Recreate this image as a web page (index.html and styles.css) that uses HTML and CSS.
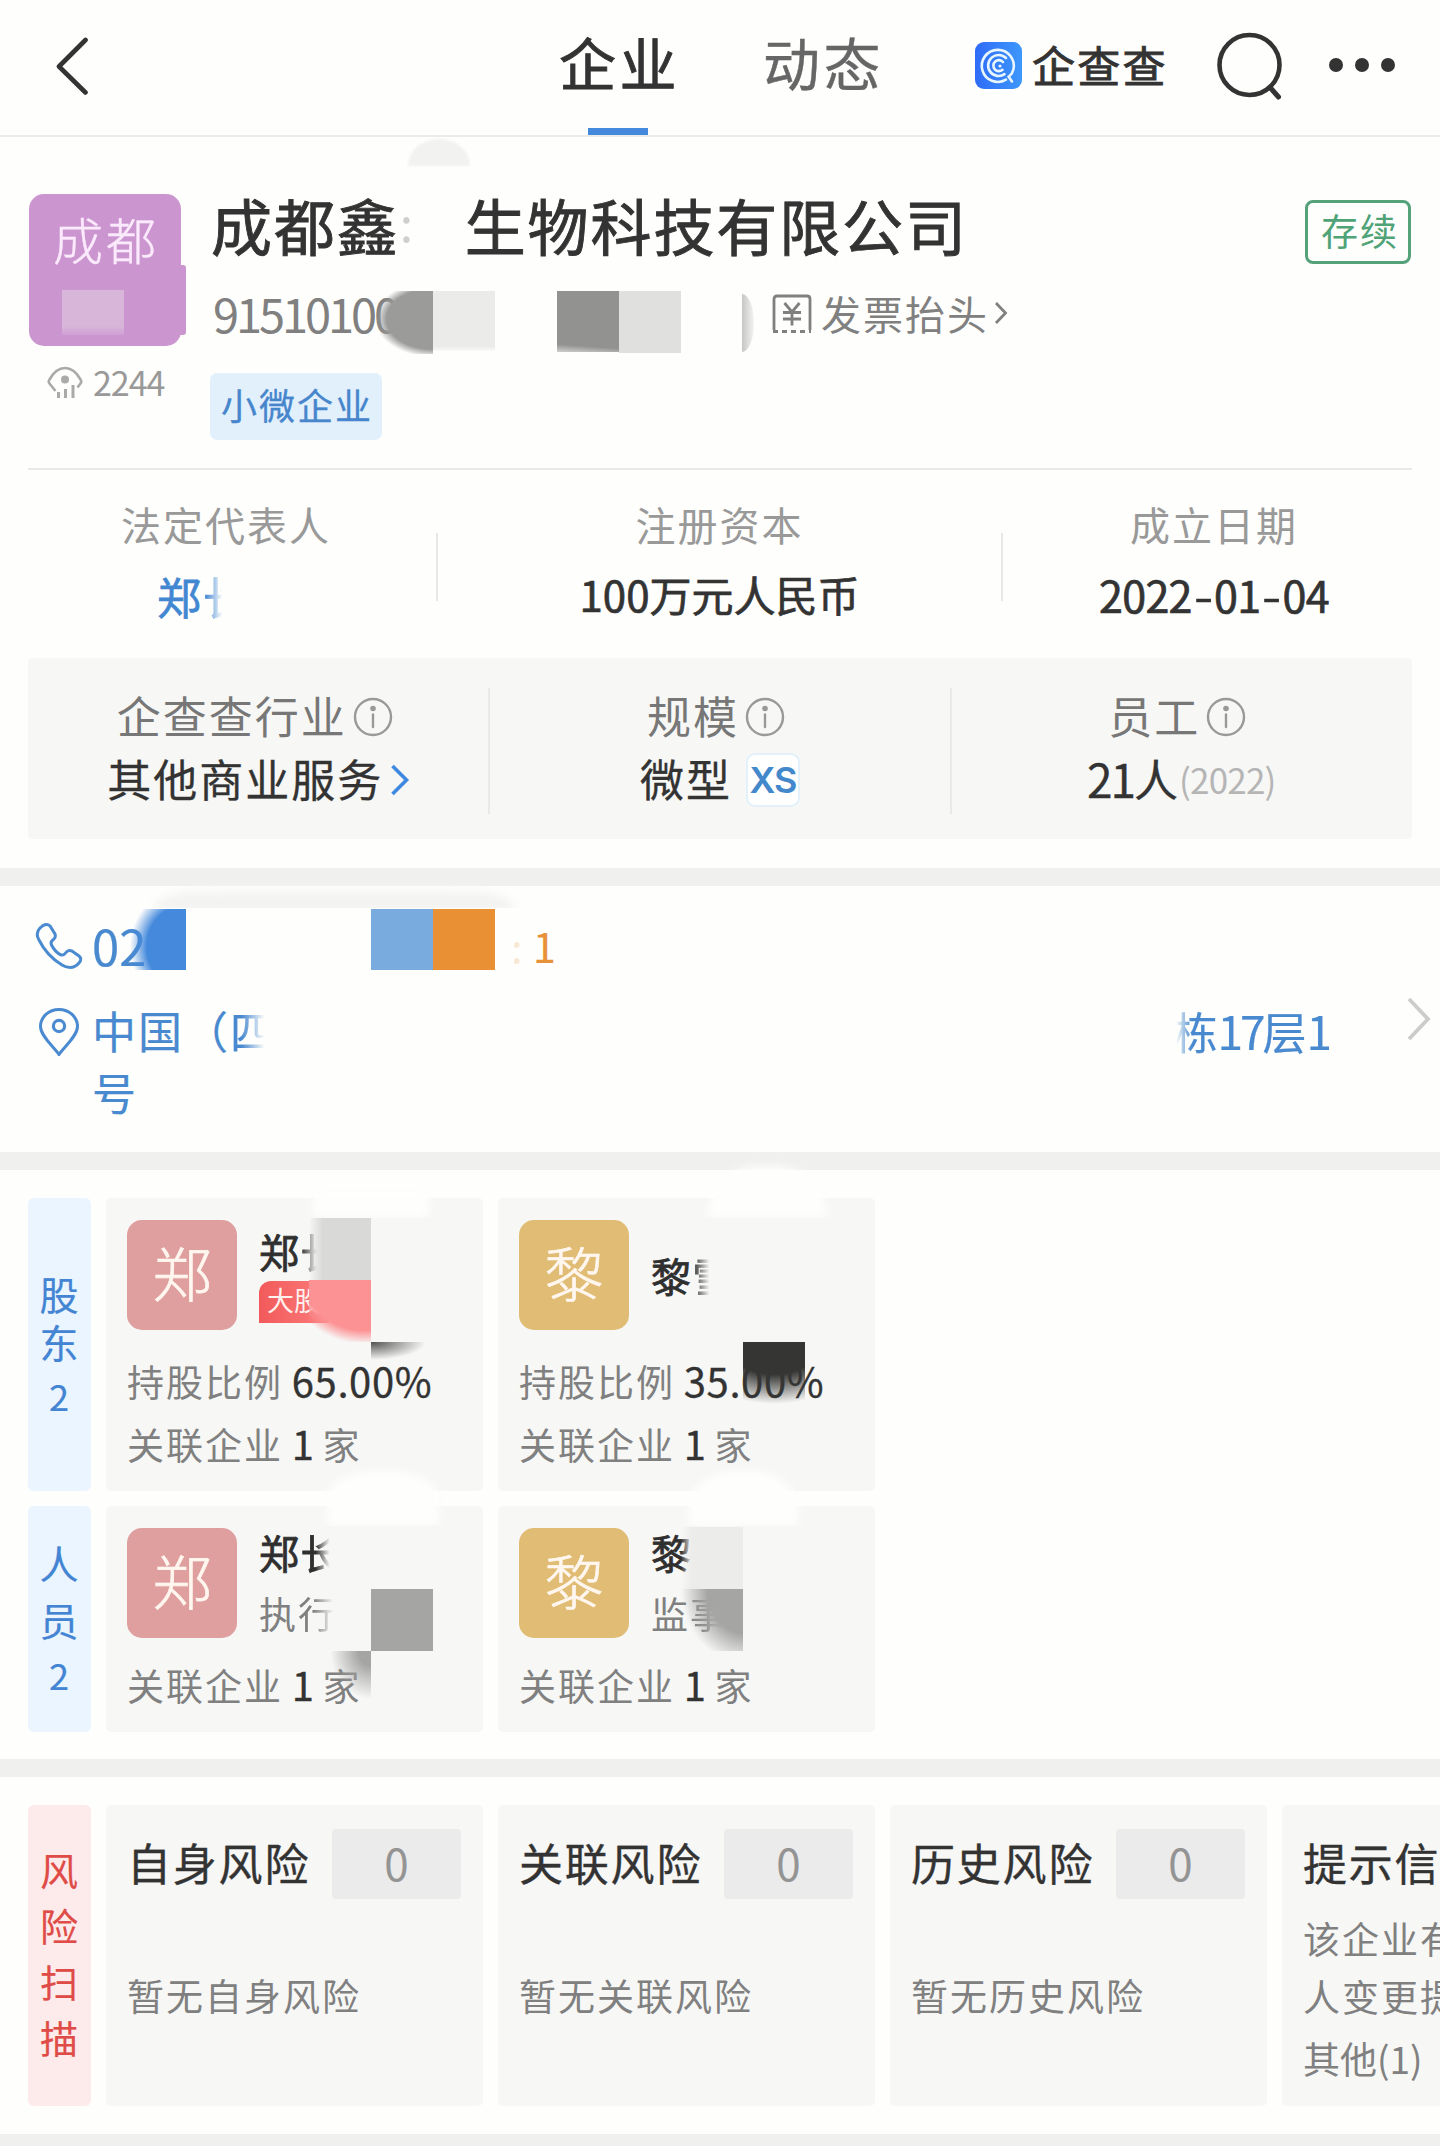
FILE: index.html
```html
<!DOCTYPE html>
<html lang="zh-CN">
<head>
<meta charset="utf-8">
<title>企查查</title>
<link rel="stylesheet" href="styles.css">
</head>
<body>
<svg class="defs" width="0" height="0">
  <symbol id="info" viewBox="0 0 40 40"><circle cx="20" cy="20" r="18" fill="none" stroke="#999" stroke-width="2.4"/><circle cx="20" cy="11.5" r="2.8" fill="#999"/><path d="M20 17.5V30" stroke="#999" stroke-width="2.4" stroke-linecap="round"/></symbol>
</svg>
<header class="topbar">
  <svg class="back" viewBox="0 0 32 58"><path d="M29.5 3L3 29.5 29.5 55.5" fill="none" stroke="#333" stroke-width="4.6" stroke-linecap="round" stroke-linejoin="round"/></svg>
  <nav class="tabs">
    <a class="tab tab-on">企业</a>
    <a class="tab">动态</a>
  </nav>
  <div class="brand">
    <svg class="brand-mark" viewBox="0 0 47 47">
      <defs><linearGradient id="bg" x1="0" y1="0" x2="1" y2="0"><stop offset="0" stop-color="#2f6bf8"/><stop offset="1" stop-color="#3d97fb"/></linearGradient></defs>
      <rect width="47" height="47" rx="9" fill="url(#bg)"/>
      <g fill="none" stroke="#e8f6ff" stroke-width="2.6" stroke-linecap="round">
        <path d="M31 37.6A16 16 0 1 1 38.4 27.5Q37.600 31.500 34 34.500M33.500 34.500L37 39.500"/>
        <path d="M29.5 32.2A10.500 10.500 0 1 1 31 16"/>
        <path d="M27.5 27.8A5.500 5.500 0 1 1 28 20"/>
      </g>
      <circle cx="25" cy="24" r="1.600" fill="#e8f6ff"/>
    </svg>
    <span class="brand-name">企查查</span>
  </div>
  <svg class="search" viewBox="0 0 66 68"><circle cx="32.5" cy="33" r="30" fill="none" stroke="#333" stroke-width="4.6"/><path d="M54 56.5L61.5 65" stroke="#333" stroke-width="5" stroke-linecap="round"/></svg>
  <svg class="more" viewBox="0 0 68 16"><circle cx="8" cy="8" r="7" fill="#333"/><circle cx="34" cy="8" r="7" fill="#333"/><circle cx="60" cy="8" r="7" fill="#333"/></svg>
</header>

<main>
<section class="company">
  <i class="smudge smudge-dome"></i>
  <div class="company-side">
    <div class="logo">成都<i class="logo-tail"></i><i class="logo-patch"></i></div>
    <div class="views">
      <svg viewBox="0 0 36 34"><path d="M8.5 26L2.5 18.5Q1 16.5 2.5 14.500Q9 3 18 3T33.500 14.500Q35 16.500 33.500 18.500L30.500 22.500" fill="none" stroke="#aaa" stroke-width="2.600"/><circle cx="18" cy="14.500" r="4" fill="#aaa"/><path d="M11.500 27V33M18.500 24V33M26 20V33" stroke="#aaa" stroke-width="3"/></svg>
      <span>2244</span>
    </div>
  </div>
  <div class="company-main">
    <h1 class="title"><span>成都鑫</span><span class="title-gap">:</span><span class="title-rest">生物科技有限公司</span></h1>
    <div class="reg">
      <div class="reg-no">91510100
        <i class="patch reg-a"></i><i class="patch reg-b"></i><i class="patch reg-c"></i><i class="patch reg-d"></i><i class="patch reg-e"></i>
      </div>
      <svg class="invoice-icon" viewBox="0 0 40 40"><path d="M2 36V5Q2 2 5 2H35Q38 2 38 5V36" fill="none" stroke="#808080" stroke-width="2.800"/><path d="M1 37.500H39" stroke="#808080" stroke-width="3" stroke-dasharray="5 4"/><path d="M12.500 9L20 18 27.500 9M11 18.500H29M11 25H29M20 18V31.500" fill="none" stroke="#808080" stroke-width="2.800"/></svg>
      <span class="invoice">发票抬头</span>
      <svg class="invoice-arrow" viewBox="0 0 14 24"><path d="M2 2L11.500 12 2 22" fill="none" stroke="#808080" stroke-width="2.800"/></svg>
    </div>
    <span class="tag">小微企业</span>
  </div>
  <span class="status">存续</span>
</section>

<section class="facts">
  <div class="fact fact-first"><span class="fact-label">法定代表人</span><span class="fact-value legal"><span>郑</span><span class="fade-legal">长</span></span></div>
  <div class="fact"><span class="fact-label">注册资本</span><span class="fact-value">100万元人民币</span></div>
  <div class="fact fact-last"><span class="fact-label">成立日期</span><span class="fact-value date">2022<span class="dash">-</span>01<span class="dash">-</span>04</span></div>
</section>

<section class="panel">
  <div class="cell">
    <div class="cell-label">企查查行业<svg class="info"><use href="#info"/></svg></div>
    <div class="cell-value">其他商业服务<svg class="cell-arrow" viewBox="0 0 20 32"><path d="M2.500 2L16.500 16 2.500 30" fill="none" stroke="#3f8ae0" stroke-width="3.600"/></svg></div>
  </div>
  <div class="cell">
    <div class="cell-label">规模<svg class="info"><use href="#info"/></svg></div>
    <div class="cell-value">微型<b class="size">XS</b></div>
  </div>
  <div class="cell">
    <div class="cell-label">员工<svg class="info"><use href="#info"/></svg></div>
    <div class="cell-value"><span class="staff">21</span>人<small>(2022)</small></div>
  </div>
</section>

<section class="contact band">
  <i class="smudge smudge-phone"></i>
  <div class="contact-row phone-row">
    <svg class="ico" viewBox="0 0 48 48"><path d="M5 6Q11 0 15 4L20 12Q21 15 19 17Q15 19.500 16.500 23Q20 30 26 33Q29 33.500 31 30.500Q33 27.500 37 29L44 34Q47.500 37 44 41Q37 49 27 43Q12 34 4 18Q0 11 5 6Z" fill="none" stroke="#4a8ad0" stroke-width="3"/></svg>
    <span class="phone">02</span><span class="phone-dot">:</span><span class="phone-count">1</span>
    <i class="patch ph-a"></i><i class="patch ph-b"></i><i class="patch ph-c"></i>
  </div>
  <div class="contact-row addr-row">
    <svg class="ico" viewBox="0 0 48 48"><path d="M24 46.500C19 39 5.500 28 5.500 18.500A18.500 17 0 0 1 42.500 18.500C42.500 28 29 39 24 46.500Z" fill="none" stroke="#4a8ad0" stroke-width="3"/><circle cx="24" cy="18" r="5.600" fill="none" stroke="#4a8ad0" stroke-width="3.200"/></svg>
    <p class="addr"><span>中国（<span class="fade-addr">四</span></span><span class="addr-end">栋<span class="addr-num">17</span>层<span class="addr-num">1</span></span><span class="addr-last">号</span></p>
    <svg class="addr-arrow" viewBox="0 0 24 44"><path d="M2 2L21 22 2 42" fill="none" stroke="#ccc" stroke-width="3.800"/></svg>
  </div>
</section>

<section class="people band">
  <div class="row row-holders">
    <div class="side">
      <span>股</span><span>东</span><span class="num">2</span>
    </div>
    <article class="card">
      <div class="who">
        <span class="avatar rose">郑</span>
        <div class="who-text"><span class="name">郑<span class="fade-s">长</span></span><span class="major">大股</span></div>
      </div>
      <p class="line">持股比例 <b>65.00%</b></p>
      <p class="line">关联企业 <b>1</b> 家</p>
      <i class="patch h1-a"></i><i class="patch h1-b"></i><i class="patch h1-c"></i><i class="smudge h1-d"></i>
    </article>
    <article class="card">
      <div class="who">
        <span class="avatar gold">黎</span>
        <div class="who-text"><span class="name">黎<span class="fade-s">雪</span></span></div>
      </div>
      <p class="line">持股比例 <b>35.00%</b></p>
      <p class="line">关联企业 <b>1</b> 家</p>
      <i class="patch h2-a"></i><i class="smudge h2-b"></i>
    </article>
  </div>
  <div class="row row-staff">
    <div class="side side-staff">
      <span>人</span><span>员</span><span class="num">2</span>
    </div>
    <article class="card">
      <div class="who">
        <span class="avatar rose">郑</span>
        <div class="who-text"><span class="name">郑<span class="fade-m">长</span></span><span class="post">执<span class="fade-l">行</span></span></div>
      </div>
      <p class="line">关联企业 <b>1</b> 家</p>
      <i class="patch s1-a"></i><i class="patch s1-b"></i><i class="smudge s1-c"></i>
    </article>
    <article class="card">
      <div class="who">
        <span class="avatar gold">黎</span>
        <div class="who-text"><span class="name">黎</span><span class="post">监<span class="fade-l">事</span></span></div>
      </div>
      <p class="line">关联企业 <b>1</b> 家</p>
      <i class="patch s2-a"></i><i class="patch s2-b"></i><i class="smudge s2-c"></i>
    </article>
  </div>
</section>

<section class="risk band">
  <div class="side side-risk"><span>风</span><span>险</span><span>扫</span><span>描</span></div>
  <article class="card"><div class="risk-head"><h2>自身风险</h2><span class="count">0</span></div><p class="none">暂无自身风险</p></article>
  <article class="card"><div class="risk-head"><h2>关联风险</h2><span class="count">0</span></div><p class="none">暂无关联风险</p></article>
  <article class="card"><div class="risk-head"><h2>历史风险</h2><span class="count">0</span></div><p class="none">暂无历史风险</p></article>
  <article class="card"><div class="risk-head"><h2>提示信</h2></div><p class="hint">该企业有<br>人变更提</p><p class="hint-other">其他(1)</p></article>
</section>
<div class="band-end"></div>
</main>
</body>
</html>
```
FILE: styles.css
```css
* { box-sizing: border-box; }
body {
  margin: 0;
  width: 1440px;
  height: 2146px;
  overflow: hidden;
  background: #fefefc;
  color: #333;
  font-family: "Noto Sans CJK SC", sans-serif;
}
h1, h2, p { margin: 0; font-weight: 400; }
b { font-weight: 400; }
svg { display: block; flex: none; }
.defs { position: absolute; }
i { display: block; }

/* top bar */
.topbar { display: flex; height: 137px; border-bottom: 2px solid #ebebea; }
.back { width: 32px; height: 58px; margin: 37px 0 0 56px; }
.tabs { display: flex; gap: 83px; margin-left: 471px; }
.tab {
  display: flex; flex-direction: column; align-items: center;
  width: 121px; height: 135px; padding-top: 21px;
  font-size: 57px; line-height: 80px; letter-spacing: 3.500px; color: #666;
  -webkit-text-stroke: .4px;
}
.tab-on { color: #333; -webkit-text-stroke: .9px; }
.tab-on::after { content: ""; width: 60px; height: 7px; margin: 27px 4px 0 0; background: #4589dd; }
.brand { display: flex; margin-left: 91px; gap: 10px; }
.brand-mark { width: 47px; height: 47px; margin-top: 42px; }
.brand-name { width: 140px; margin-top: 34px; font-size: 43px; line-height: 60px; letter-spacing: 2.200px; -webkit-text-stroke: .9px; white-space: nowrap; }
.search { width: 66px; height: 68px; margin: 32px 0 0 45px; }
.more { width: 68px; height: 16px; margin: 57px 0 0 45px; }

/* smears left over the content */
.patch, .smudge { position: absolute; }
.smudge { background: #fefefc; }

/* company */
.company { position: relative; display: flex; height: 331px; padding-left: 29px; }
.smudge-dome { left: 408px; top: 2px; width: 62px; height: 27px; background: #f2f2f1; border-radius: 31px 31px 0 0 / 26px 26px 0 0; filter: blur(1px); }
.company-side { width: 182px; padding-top: 57px; }
.logo {
  position: relative; width: 152px; height: 152px; border-radius: 15px; background: #cb96d0;
  padding-left: 24px; color: #fbeafb; font-size: 50px; line-height: 89px; letter-spacing: 3px; font-weight: 300;
  -webkit-text-stroke: .4px;
}
.logo-tail { position: absolute; left: 140px; top: 71px; width: 17px; height: 70px; background: #cb96d0; border-radius: 0 3px 3px 0; }
.logo-patch { position: absolute; left: 33px; top: 96px; width: 62px; height: 45px; background: linear-gradient(#d8b6da 80%, #cf9fd3); }
.views { display: flex; align-items: center; gap: 10px; height: 40px; margin: 16px 0 0 18px; color: #999; font-size: 34px; line-height: 40px; letter-spacing: -1px; }
.views svg { width: 36px; height: 34px; }
.company-main { padding-top: 53px; width: 1094px; }
.title { display: flex; height: 70px; font-size: 61px; line-height: 70px; letter-spacing: 1.900px; -webkit-text-stroke: .9px; white-space: nowrap; }
.title-gap { width: 65px; color: #bbb; font-size: 48px; line-height: 62px; -webkit-text-stroke: 0; clip-path: inset(0 54px 0 0); opacity: .7; }
.reg { display: flex; align-items: center; height: 62px; margin-top: 22px; color: #808080; }
.reg-no { position: relative; width: 561px; padding-left: 2px; font-size: 47px; line-height: 62px; letter-spacing: -3.100px; }
.reg-a { left: 166px; top: 9px; width: 56px; height: 63px; background: radial-gradient(ellipse 58px 38px at 56px 28px, #9b9b9a 80%, transparent); }
.reg-b { left: 222px; top: 9px; width: 62px; height: 60px; background: linear-gradient(#ebebea 92%, #fafaf9); }
.reg-c { left: 346px; top: 9px; width: 62px; height: 61px; background: linear-gradient(184deg, #929290 88%, #d0d0cf); }
.reg-d { left: 408px; top: 9px; width: 62px; height: 62px; background: #e0e0de; }
.reg-e { left: 531px; top: 12px; width: 12px; height: 58px; background: linear-gradient(90deg, #c6c6c5, #f4f4f3); border-radius: 0 12px 12px 0 / 0 29px 29px 0; }
.invoice-icon { width: 40px; height: 40px; margin-top: 2px; }
.invoice { margin-left: 9px; font-size: 40px; line-height: 56px; letter-spacing: 2px; }
.invoice-arrow { width: 14px; height: 24px; margin-left: 5px; }
.tag { display: block; width: 172px; height: 67px; margin: 29px 0 0 -1px; padding-left: 11px; border-radius: 7px; background: #e2f0fc; color: #4786cc; font-size: 36px; line-height: 62px; letter-spacing: 2px; white-space: nowrap; -webkit-text-stroke: .3px; }
.status { width: 106px; height: 64px; margin-top: 63px; padding-left: 13px; border: 3px solid #55a17a; border-radius: 8px; color: #4fa377; font-size: 37px; line-height: 55px; letter-spacing: 2px; white-space: nowrap; }

/* facts */
.facts { display: grid; grid-template-columns: 409px 565px 410px; height: 190px; margin: 0 28px; border-top: 2px solid #e9e9e8; padding-top: 26px; }
.fact { position: relative; display: flex; flex-direction: column; align-items: center; }
.fact + .fact::before { content: ""; position: absolute; left: -1px; top: 37px; width: 2px; height: 68px; background: #e8e8e7; }
.fact-first { padding-right: 13px; }
.fact-last { padding-left: 14px; }
.fact-label { color: #999; font-size: 40px; line-height: 56px; letter-spacing: 2px; }
.fact-value { margin-top: 12px; font-size: 42px; line-height: 60px; -webkit-text-stroke: .7px; white-space: nowrap; }
.date { font-size: 43px; letter-spacing: -.700px; }
.dash { display: inline-block; transform: scaleX(1.25); margin: 0 4px; }
.legal { width: 138px; margin-top: 14px; color: #4287d2; font-size: 44px; letter-spacing: 2px; }
.fade-legal { -webkit-mask: linear-gradient(90deg, #000 5%, transparent 42%); mask: linear-gradient(90deg, #000 5%, transparent 42%); }

/* industry panel */
.panel { display: grid; grid-template-columns: repeat(3, 1fr); height: 181px; margin: 0 28px; background: #f7f7f6; border-radius: 4px; }
.cell { position: relative; display: flex; flex-direction: column; align-items: center; padding-top: 26px; }
.cell + .cell::before { content: ""; position: absolute; left: -1px; top: 30px; width: 2px; height: 126px; background: #e9e9e8; }
.cell-label { display: flex; align-items: center; gap: 6px; height: 62px; margin-left: -8px; color: #777; font-size: 44px; line-height: 62px; letter-spacing: 2px; }
.info { width: 40px; height: 40px; margin-top: 4px; }
.cell-value { display: flex; align-items: center; height: 64px; font-size: 44px; line-height: 64px; letter-spacing: 2px; -webkit-text-stroke: .3px; }
.cell-arrow { width: 20px; height: 32px; margin: 4px 0 0 7px; }
.staff { font-size: 46px; letter-spacing: -2px; }
.size { width: 54px; height: 54px; margin: 4px 0 0 14px; border: 2px solid #e2f1fa; border-radius: 9px; background: #fff; color: #4488cc; font: 600 36px/51px "Inter", sans-serif; letter-spacing: -1px; text-align: center; -webkit-text-stroke: 0; }
.cell-value small { margin: 1px 0 0 -1px; color: #b5b5b5; font-size: 35px; letter-spacing: -.800px; -webkit-text-stroke: 0; }

/* grey band above each block */
.band { position: relative; border-top: 18px solid #f0f0ef; }

/* contact */
.contact { height: 284px; margin-top: 29px; padding-left: 35px; color: #4889cf; -webkit-text-stroke: .2px; }
.smudge-phone { left: 155px; top: 2px; width: 358px; height: 21px; background: linear-gradient(#fafaf9, #eeeeed); border-radius: 60px 60px 0 0 / 20px 20px 0 0; filter: blur(4px); clip-path: inset(-4px -12px 1px -12px); }
.contact-row { position: relative; display: flex; }
.ico { width: 48px; height: 48px; }
.phone-row { height: 84px; padding-top: 36px; }
.phone { width: 443px; margin: -8px 0 0 9px; font-size: 49px; line-height: 62px; }
.phone-dot, .phone-count { margin-top: -8px; color: #e79238; font-size: 41px; line-height: 62px; }
.phone-dot { margin-left: -24px; width: 22px; opacity: .2; }
.ph-a { left: 95px; top: 23px; width: 56px; height: 61px; background: radial-gradient(ellipse 56px 60px at 56px 38px, #4489dc 70%, transparent); }
.ph-b { left: 336px; top: 23px; width: 62px; height: 61px; background: #7aabdf; }
.ph-c { left: 398px; top: 23px; width: 62px; height: 61px; background: #ea9034; }
.addr-row { padding-top: 38px; }
.addr { display: flex; flex-wrap: wrap; justify-content: space-between; width: 1237px; margin: -8px 0 0 9px; font-size: 44px; line-height: 61px; letter-spacing: 2px; }
.addr-last { width: 100%; }
.addr-end { letter-spacing: 0; -webkit-mask: linear-gradient(90deg, transparent 2%, #000 12%); mask: linear-gradient(90deg, transparent 2%, #000 12%); }
.addr-num { font-size: 46px; letter-spacing: -3px; }
.fade-addr { -webkit-mask: linear-gradient(90deg, #000 25%, transparent 75%); mask: linear-gradient(90deg, #000 25%, transparent 75%); }
.addr-arrow { width: 24px; height: 44px; margin: -11px 0 0 78px; }

/* people */
.people { height: 607px; padding: 28px 0 0 28px; }
.row { display: flex; gap: 15px; }
.row-holders { height: 293px; }
.row-staff { height: 226px; margin-top: 15px; }
.side { width: 63px; padding-top: 71px; border-radius: 6px; background: #eaf5ff; color: #4384d3; font-size: 39px; line-height: 48px; text-align: center; -webkit-text-stroke: .2px; }
.side span { display: block; margin-left: -1px; }
.side .num { margin-top: 6px; font-size: 36px; }
.side-staff { padding-top: 28px; line-height: 57px; }
.side-staff .num { margin-top: -2px; }
.card { position: relative; flex: none; width: 377px; padding: 22px 0 0 21px; border-radius: 5px; background: #f7f7f6; }
.who { display: flex; height: 110px; margin-bottom: 19px; }
.avatar { width: 110px; height: 110px; border-radius: 15px; color: #fff7ef; font-size: 59px; font-weight: 300; line-height: 103px; text-align: center; -webkit-text-stroke: .7px; }
.rose { background: #e09f9f; }
.gold { background: #e0bc75; }
.who-text { display: flex; flex-direction: column; justify-content: center; margin-left: 22px; }
.name { font-size: 40px; line-height: 60px; -webkit-text-stroke: .8px; letter-spacing: 1.500px; color: #2f2f2f; }
.major { width: 70px; height: 42px; margin-bottom: 6px; padding-left: 8px; border-radius: 12px 0 0 0; background: linear-gradient(90deg, #f25a5a, #fb7c7c); color: #fff1ee; font-size: 27px; line-height: 38px; }
.post { font-size: 37px; line-height: 62px; letter-spacing: 2px; color: #808080; }
.fade-s { -webkit-mask: linear-gradient(90deg, #000 0%, transparent 40%); mask: linear-gradient(90deg, #000 0%, transparent 40%); }
.fade-m { -webkit-mask: linear-gradient(90deg, #000 35%, transparent 70%); mask: linear-gradient(90deg, #000 35%, transparent 70%); }
.fade-l { -webkit-mask: linear-gradient(90deg, #000 40%, transparent 90%); mask: linear-gradient(90deg, #000 40%, transparent 90%); }
.line { height: 63px; color: #808080; font-size: 37px; line-height: 63px; letter-spacing: 2px; word-spacing: -2.500px; white-space: nowrap; }
.line b { margin-left: 1px; color: #333; font-size: 40px; letter-spacing: .600px; -webkit-text-stroke: .3px; }
.row-staff .line { margin-top: -4px; }
.h1-a { left: 203px; top: 20px; width: 62px; height: 62px; background: linear-gradient(90deg, transparent, #d9d9d8 22%); }
.h1-b { left: 203px; top: 82px; width: 62px; height: 62px; background: radial-gradient(ellipse 75px 68px at 55px -4px, #fc9294 80%, transparent); }
.h1-c { left: 265px; top: 144px; width: 55px; height: 18px; background: radial-gradient(ellipse 55px 18px at 0 0, #50504f, transparent); }
.h1-d { left: 207px; top: -6px; width: 116px; height: 26px; filter: blur(5px); clip-path: inset(-15px -15px 0 -15px); }
.h2-a { left: 245px; top: 144px; width: 62px; height: 62px; background: radial-gradient(ellipse 90px 62px at 31px 0, #353534 52%, transparent); }
.h2-b { left: 209px; top: -32px; width: 120px; height: 52px; border-radius: 60px 60px 0 0; filter: blur(5px); clip-path: inset(-15px -15px 0 -15px); }
.s1-a { left: 265px; top: 83px; width: 62px; height: 62px; background: #a5a5a4; }
.s1-b { left: 224px; top: 145px; width: 41px; height: 48px; background: radial-gradient(ellipse 41px 48px at 41px 0, #a5a5a4 30%, transparent); }
.s1-c { left: 221px; top: -36px; width: 112px; height: 56px; border-radius: 60px 60px 0 0 / 30px 30px 0 0; filter: blur(5px); clip-path: inset(-15px -15px 0 -15px); }
.s2-a { left: 183px; top: 21px; width: 62px; height: 62px; background: linear-gradient(90deg, transparent, #ececeb 18%); }
.s2-b { left: 183px; top: 83px; width: 62px; height: 62px; background: radial-gradient(ellipse 66px 75px at 66px 0, #a5a5a4 60%, transparent); }
.s2-c { left: 190px; top: -36px; width: 110px; height: 56px; border-radius: 60px 60px 0 0 / 40px 40px 0 0; filter: blur(5px); clip-path: inset(-15px -15px 0 -15px); }

/* risk */
.risk { display: flex; gap: 15px; height: 375px; padding: 28px 0 46px 28px; overflow: hidden; }
.risk .card { height: 301px; padding-top: 24px; }
.side-risk { flex: none; height: 301px; padding-top: 36px; background: #fdeaea; color: #df4c48; font-size: 38px; line-height: 56px; }
.risk-head { display: flex; height: 70px; }
.risk-head h2 { width: 205px; font-size: 44px; line-height: 67px; letter-spacing: 1.800px; white-space: nowrap; -webkit-text-stroke: .4px; }
.count { width: 129px; height: 70px; border-radius: 4px; background: #ebebeb; color: #949494; font-size: 44px; line-height: 66px; text-align: center; }
.none, .hint, .hint-other { color: #808080; font-size: 37px; line-height: 58px; letter-spacing: 2px; white-space: nowrap; }
.none { margin-top: 67px; }
.hint { margin-top: 10px; }
.hint-other { margin-top: 4px; letter-spacing: 0; }
.band-end { height: 12px; background: #f0f0ef; }
```
